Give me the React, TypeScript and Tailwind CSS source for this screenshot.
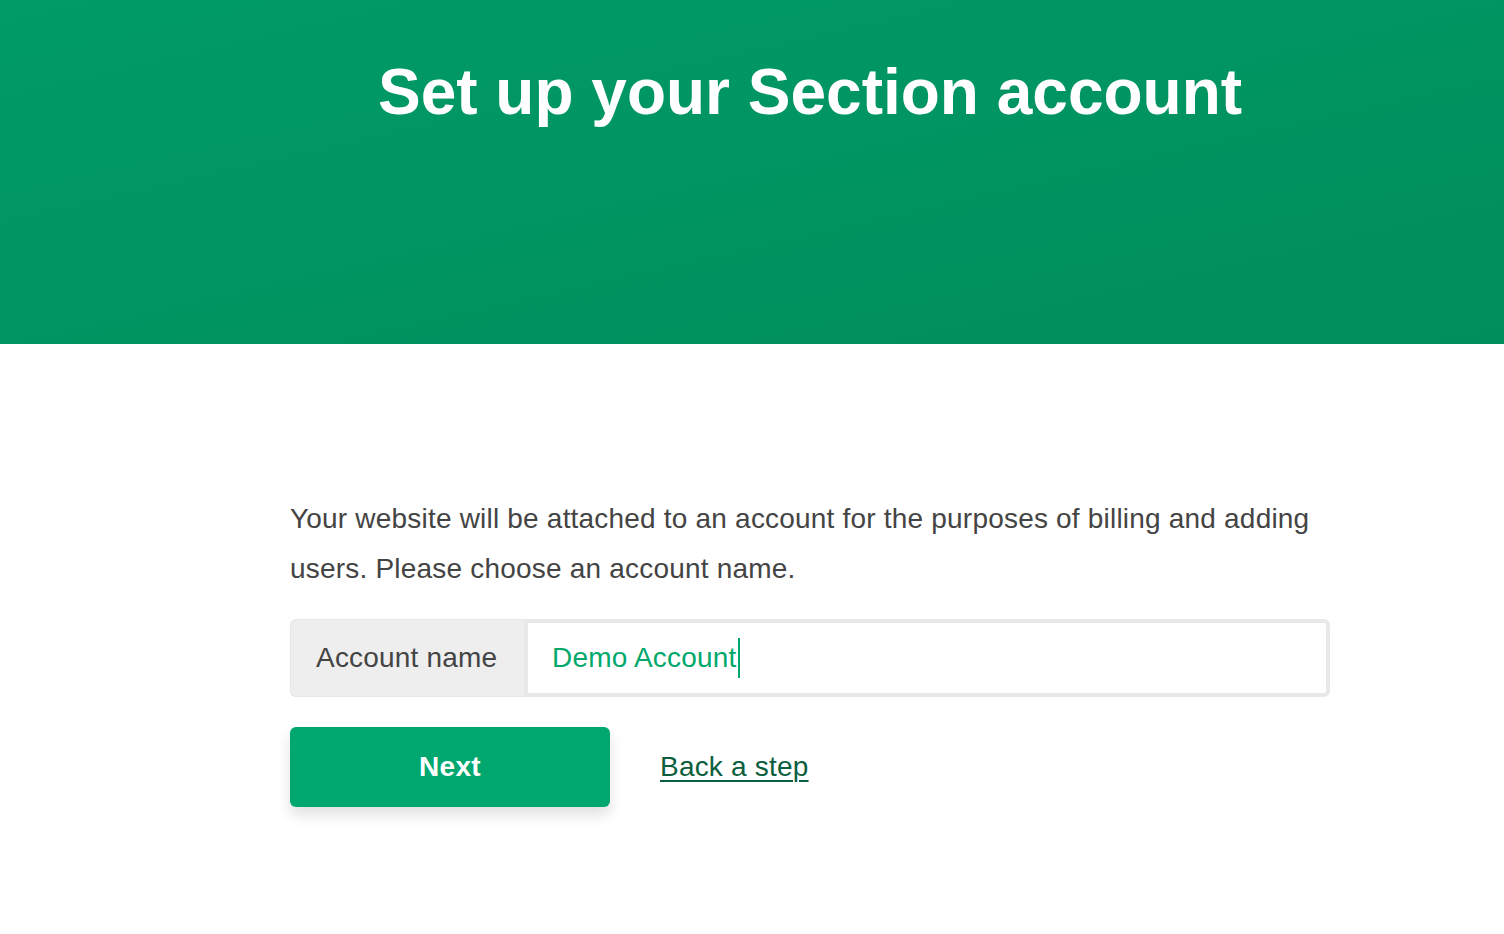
import {FC} from 'react';

const font = {fontFamily: '"Liberation Sans", Arial, sans-serif'};

const App: FC = () => {
  return (
    <div className="min-h-[934px] bg-white" style={font}>
      <header className="h-[344px] bg-gradient-to-br from-[#009b67] to-[#008e5c]">
        <div className="ml-[290px] w-[1040px] pt-[60px]">
          <h1 className="text-center text-[64px] leading-[64px] font-bold text-white">
            Set up your Section account
          </h1>
        </div>
      </header>

      <main className="ml-[290px] w-[1040px] pt-[150px]">
        <p className="text-[28px] leading-[50px] tracking-[0.2px] text-[#444444]">
          Your website will be attached to an account for the purposes of billing and adding users.
          Please choose an account name.
        </p>

        <div className="mt-[25px] flex h-[78px] rounded-md">
          <div className="flex w-[234px] items-center rounded-l-md border border-r-0 border-[#e6e6e6] bg-[#eeeeee] pl-[25px] text-[28px] tracking-[0.2px] text-[#444444]">
            Account name
          </div>
          <div className="flex flex-1 items-center rounded-r-md border-[4px] border-[#e8e8e8] bg-white pl-[24px]">
            <span className="text-[28px] tracking-[0.2px] text-[#00a86b]">Demo Account</span>
            <span className="ml-[1px] h-[40px] w-[2px] bg-[#00a86b]" />
          </div>
        </div>

        <div className="mt-[30px] flex items-center gap-[50px]">
          <button className="h-[80px] w-[320px] rounded-md bg-[#00a86f] text-[28px] font-bold tracking-[0.3px] text-white shadow-[0_8px_14px_rgba(0,0,0,0.12)]">
            Next
          </button>
          <a
            href="#"
            className="text-[28px] tracking-[0.2px] text-[#0a5e3e] underline decoration-[1.5px] underline-offset-[4px]">
            Back a step
          </a>
        </div>
      </main>
    </div>
  );
};

export default App;
